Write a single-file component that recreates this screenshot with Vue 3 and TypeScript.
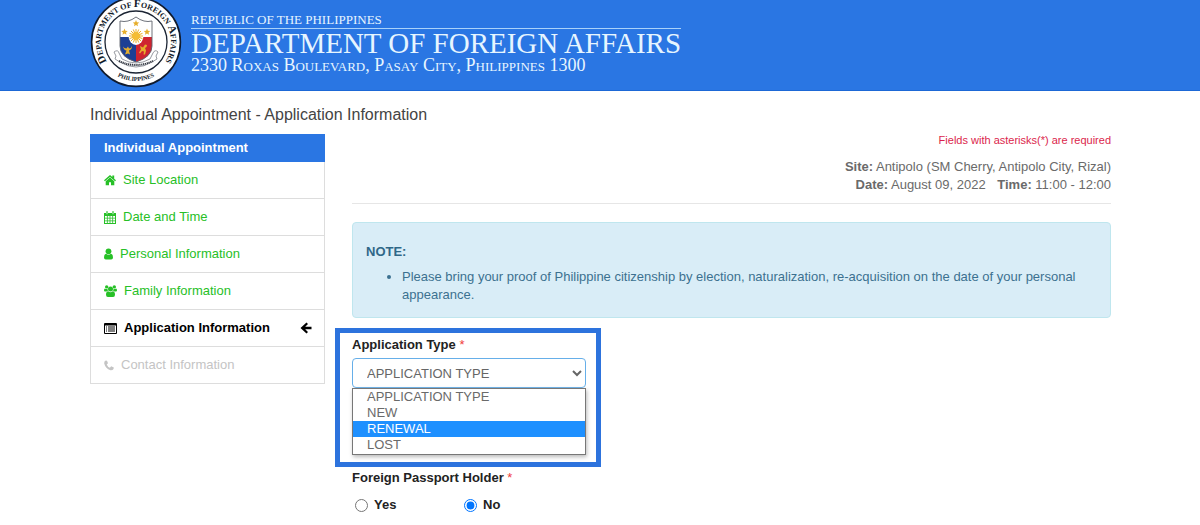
<script setup lang="ts">
import { ref } from 'vue'

type IconName = 'home' | 'calendar' | 'user' | 'users' | 'list' | 'phone'
interface Step {
  label: string
  icon: IconName
  width: number
  state: 'done' | 'current' | 'pending'
}

const steps: Step[] = [
  { label: 'Site Location', icon: 'home', width: 12, state: 'done' },
  { label: 'Date and Time', icon: 'calendar', width: 12, state: 'done' },
  { label: 'Personal Information', icon: 'user', width: 9, state: 'done' },
  { label: 'Family Information', icon: 'users', width: 13, state: 'done' },
  { label: 'Application Information', icon: 'list', width: 13, state: 'current' },
  { label: 'Contact Information', icon: 'phone', width: 10, state: 'pending' },
]

const options = ['APPLICATION TYPE', 'NEW', 'RENEWAL', 'LOST']
const applicationType = ref('APPLICATION TYPE')
const highlighted = ref('RENEWAL')
const foreignPassport = ref('No')
</script>

<template>
  <div class="page">
    <header class="banner">
      <svg class="seal" viewBox="0 0 92 92" role="img" aria-label="Department of Foreign Affairs seal">
        <defs>
          <path id="arc-top" d="M16 64.200 A35 35 0 1 1 76 64.200" />
          <path id="arc-bottom" d="M20 75 A39 39 0 0 0 72 75" />
          <clipPath id="shield">
            <path d="M30 25 Q38 27 46 21 Q54 27 62 25 V50 Q62 61 46 66 Q30 61 30 50 Z" />
          </clipPath>
        </defs>
        <circle cx="46" cy="46" r="44.4" fill="#fff" stroke="#101a2c" stroke-width="1.6" />
        <circle cx="46" cy="46" r="31" fill="#fff" stroke="#1b2433" stroke-width="1.3" />
        <text class="seal-text">
          <textPath href="#arc-top" startOffset="50%" text-anchor="middle"><tspan class="big">D</tspan>EPARTMENT OF <tspan class="big">F</tspan>OREIGN <tspan class="big">A</tspan>FFAIRS</textPath>
        </text>
        <text class="seal-text small">
          <textPath href="#arc-bottom" startOffset="50%" text-anchor="middle">PHILIPPINES</textPath>
        </text>
        <g clip-path="url(#shield)">
          <rect x="29" y="20" width="34" height="22" fill="#fff" />
          <rect x="29" y="41" width="17" height="26" fill="#1d3f94" />
          <rect x="46" y="41" width="17" height="26" fill="#cf2430" />
        </g>
        <path d="M30 25 Q38 27 46 21 Q54 27 62 25 V50 Q62 61 46 66 Q30 61 30 50 Z" fill="none" stroke="#5d626c" stroke-width=".9" />
        <ellipse cx="46" cy="40" rx="7.500" ry="9" fill="#fff" />
        <path d="M46 33V47M39 40H53M41 35L51 45M51 35L41 45M43.300 33.500L48.700 46.500M48.700 33.500L43.300 46.500M39.500 37.300L52.500 42.700M52.500 37.300L39.500 42.700" stroke="#eeb026" stroke-width="1" />
        <circle cx="46" cy="40" r="4" fill="#f4bd35" />
        <g fill="#e6ae2c">
          <path d="M46 24l.9 2.200 2.300.2-1.700 1.500.5 2.300-2-1.200-2 1.200.5-2.300-1.700-1.500 2.300-.2z" />
          <path d="M34.500 32.500l.9 2.200 2.300.2-1.700 1.500.5 2.300-2-1.200-2 1.200.5-2.300-1.700-1.500 2.300-.2z" />
          <path d="M57 32.500l.9 2.200 2.300.2-1.700 1.500.5 2.300-2-1.200-2 1.200.5-2.300-1.700-1.500 2.300-.2z" />
          <path d="M33 50.500q1 4 3.500 4l-1.500 4 3-1 2 1-1-4q3-1 3-4.500-1 2.500-3 2.500l-1-2-1.500 2q-2.500 0-3.500-2z" />
          <path d="M50 50l3 1.500 2-3 2 .5-.5 2-1.500 1 1 2.500-1 4h-1.500l.5-3-2-.5-2 2.500-1-1 2-3z" />
        </g>
        <path d="M24 56q4-3 5 1l3 6q14 8 28 0l3-6q2-4 5-1l-2 4 1 3-5 3q-16 10-32 0l-5-3 1-3z" fill="#fff" stroke="#8b8f96" stroke-width=".9" />
        <path d="M29 65q17 8 34 0" fill="none" stroke="#353a44" stroke-width="2" stroke-dasharray="1.200 .7" />
      </svg>
      <div class="banner-text">
        <div class="republic">REPUBLIC OF THE PHILIPPINES</div>
        <div class="department">DEPARTMENT OF FOREIGN AFFAIRS</div>
        <div class="address">2330 Roxas Boulevard, Pasay City, Philippines 1300</div>
      </div>
    </header>

    <main class="content">
      <h1 class="title">Individual Appointment - Application Information</h1>
      <div class="columns">
        <nav class="steps" aria-label="Individual Appointment">
          <h2 class="steps-head">Individual Appointment</h2>
          <a v-for="step in steps" :key="step.label" href="#" class="step" :class="step.state">
            <svg v-if="step.icon === 'home'" :width="step.width" height="12" viewBox="0 0 12 12">
              <path d="M6 1 0 6.300l.9 1L6 2.900l5.100 4.400.9-1-1.800-1.600V1.500H8.300v1.500z" />
              <path d="M6 3.500 1.700 7.300V11.200h3.300V8.200h2v3h3.300V7.300z" />
            </svg>
            <svg v-else-if="step.icon === 'calendar'" :width="step.width" height="13" viewBox="0 0 12 13">
              <path fill-rule="evenodd" d="M0 2h2V.5h2V2h4V.5h2V2h2v11H0zM1 5v1.800h1.900V5zM3.700 5v1.800h1.900V5zM6.400 5v1.800h1.900V5zM9.100 5v1.800H11V5zM1 7.600v1.800h1.900V7.600zM3.700 7.600v1.800h1.900V7.600zM6.400 7.600v1.800h1.900V7.600zM9.100 7.600v1.800H11V7.600zM1 10.200V12h1.900v-1.800zM3.700 10.200V12h1.900v-1.800zM6.400 10.200V12h1.900v-1.800zM9.100 10.200V12H11v-1.800z" />
              <path d="M2.600 1h.8v2.300h-.8zM8.600 1h.8v2.300h-.8z" fill="#fff" />
            </svg>
            <svg v-else-if="step.icon === 'user'" :width="step.width" height="12" viewBox="0 0 9 12">
              <circle cx="4.500" cy="3.300" r="2.900" />
              <path d="M2 5.800Q0 6.200 0 9.500q0 2 1.800 2h5.400q1.800 0 1.800-2Q9 6.200 7 5.800 4.500 7.800 2 5.800z" />
            </svg>
            <svg v-else-if="step.icon === 'users'" :width="step.width" height="12" viewBox="0 0 13 12">
              <circle cx="2.700" cy="1.900" r="1.700" /><circle cx="10.300" cy="1.900" r="1.700" />
              <circle cx="6.500" cy="4" r="2.500" />
              <path d="M1 3.500Q0 3.600 0 5.500 0 6.500 1 6.500h1.600Q3.300 5.900 4 5.800 3.400 4.900 3.500 3.800 2.200 4.500 1 3.500zM12 3.500q1 .1 1 2 0 1-1 1h-1.600Q9.700 5.900 9 5.800q.6-.9.500-2 1.300.7 2.500-.3z" />
              <path d="M4.200 6.300Q2 6.500 2 9.800 2 12 3.900 12h5.200Q11 12 11 9.800 11 6.500 8.800 6.300q-2.300 2-4.600 0z" />
            </svg>
            <svg v-else-if="step.icon === 'list'" :width="step.width" height="11" viewBox="0 0 13 11">
              <path fill-rule="evenodd" d="M1 0h11q1 0 1 1v9q0 1-1 1H1q-1 0-1-1V1q0-1 1-1zM1 2.500V10h11V2.500z" />
              <path d="M2 3.500h1v1H2zM4 3.500h7v1H4zM2 5.500h1v1H2zM4 5.500h7v1H4zM2 7.600h1v1H2zM4 7.600h7v1H4z" />
            </svg>
            <svg v-else :width="step.width" height="11" viewBox="0 0 10 11">
              <path d="M1.800.5 3 .8l1 2.400-1.300 1.200q1 2.400 3.200 3.300l1.300-1.400L9.800 7.600 9.500 9q-.8 1.500-3 1.300Q1.500 8.700.2 3.500 0 1.200 1.800.5z" />
            </svg>
            <span>{{ step.label }}</span>
            <svg v-if="step.state === 'current'" class="arrow" width="12" height="12" viewBox="0 0 12 12">
              <path d="M6.500.4 8 1.900 5.200 4.800H11.500V7.200H5.200L8 10.100 6.500 11.600.5 6z" />
            </svg>
          </a>
        </nav>

        <form class="form">
          <p class="required-note">Fields with asterisks(*) are required</p>
          <div class="summary">
            <div><b>Site:</b> Antipolo (SM Cherry, Antipolo City, Rizal)</div>
            <div><b>Date:</b> August 09, 2022 <b class="time">Time:</b> 11:00 - 12:00</div>
          </div>
          <section class="note">
            <strong>NOTE:</strong>
            <ul>
              <li>Please bring your proof of Philippine citizenship by election, naturalization, re-acquisition on the date of your personal appearance.</li>
            </ul>
          </section>

          <div class="type-field">
            <label class="field-label" for="application-type">Application Type <span class="star">*</span></label>
            <select id="application-type" v-model="applicationType" class="type-select">
              <option v-for="option in options" :key="option">{{ option }}</option>
            </select>
            <ul class="type-options" role="listbox" aria-label="Application Type">
              <li
                v-for="option in options"
                :key="option"
                role="option"
                :aria-selected="option === highlighted"
                :class="{ active: option === highlighted }"
                @mouseenter="highlighted = option"
                @click="applicationType = option"
              >{{ option }}</li>
            </ul>
          </div>

          <fieldset class="passport">
            <legend class="field-label">Foreign Passport Holder <span class="star">*</span></legend>
            <div class="radios">
              <label v-for="answer in ['Yes', 'No']" :key="answer">
                <input v-model="foreignPassport" type="radio" name="foreign-passport" :value="answer" />{{ answer }}
              </label>
            </div>
          </fieldset>
        </form>
      </div>
    </main>
  </div>
</template>

<style>
body {
  margin: 0;
  background: #fff;
}
</style>

<style scoped>
.page {
  font: 13px/18px "Liberation Sans", Arial, sans-serif;
  color: #6a6a6a;
}
.page * {
  box-sizing: border-box;
}
.banner {
  display: flex;
  align-items: flex-start;
  gap: 9px;
  height: 91px;
  padding: 0 90px;
  overflow: hidden;
  background: #2a76e3;
  border-bottom: 1px solid #1d68d6;
}
.seal {
  flex: none;
  width: 92px;
  height: 92px;
  margin-top: -4px;
}
.seal-text {
  font: bold 8px "Liberation Serif", serif;
  fill: #111a29;
}
.seal-text .big {
  font-size: 11px;
}
.seal-text.small {
  font-size: 6px;
}
.banner-text {
  padding-top: 12px;
  font-family: "Liberation Serif", "Times New Roman", serif;
  color: #e6f5ff;
  white-space: nowrap;
}
.republic {
  font-size: 13px;
  line-height: 16px;
  border-bottom: 1px solid #a9d2fa;
}
.department {
  font-size: 29px;
  line-height: 28px;
}
.address {
  font-size: 18px;
  line-height: 16px;
  font-variant: small-caps;
}
.content {
  padding: 14px 89px 12px 90px;
}
.title {
  margin: 0 0 9px;
  font-size: 16px;
  line-height: 20px;
  font-weight: normal;
  color: #444;
}
.columns {
  display: flex;
  align-items: flex-start;
  gap: 27px;
}
.steps {
  flex: 0 0 235px;
  border: 1px solid #ddd;
  border-top: 0;
}
.steps-head {
  margin: 0 -1px;
  padding: 0 14px;
  font-size: 13px;
  line-height: 28px;
  color: #fff;
  background: #2a76e3;
}
.step {
  display: flex;
  align-items: center;
  gap: 7px;
  height: 37px;
  padding: 0 12px 0 13px;
  border-bottom: 1px solid #ddd;
  text-decoration: none;
  color: #27c027;
}
.step:last-child {
  height: 36px;
  border-bottom: 0;
}
.step svg {
  flex: none;
  fill: currentColor;
}
.step.current {
  font-weight: bold;
  color: #000;
}
.step.pending {
  color: #c4c4c4;
}
.step .arrow {
  margin-left: auto;
}
.form {
  flex: 1;
  min-width: 0;
}
.required-note {
  margin: 0 0 11px;
  font-size: 11px;
  line-height: 13px;
  text-align: right;
  color: #db1f4c;
}
.summary {
  padding-bottom: 9px;
  border-bottom: 1px solid #e6e6e6;
  text-align: right;
}
.time {
  margin-left: 8px;
}
.note {
  margin: 18px 0 10px;
  padding: 20px 13px 13px;
  border: 1px solid #bfe6ee;
  border-radius: 4px;
  background: #d9edf7;
  color: #3c7190;
}
.note strong {
  display: block;
  color: #2f6788;
}
.note ul {
  margin: 7px 0 0;
  padding-left: 36px;
}
.type-field {
  width: 266px;
  margin-left: -17px;
  padding: 3px 10px 7px 12px;
  border: 5px solid #2d73dd;
}
.field-label {
  display: block;
  padding: 0;
  font-weight: bold;
  color: #222;
}
.star {
  font-weight: normal;
  color: #f03c3c;
}
.type-select {
  display: block;
  width: 100%;
  height: 30px;
  margin-top: 4px;
  padding: 0 0 0 10px;
  border: 1px solid #66afe9;
  border-radius: 4px;
  background: #fff;
  font: inherit;
  color: #666;
}
.type-options {
  margin: 0;
  padding: 0 0 1px;
  list-style: none;
  border: 1px solid #777;
  box-shadow: 1px 2px 4px #bbb;
}
.type-options li {
  padding-left: 14px;
  line-height: 16px;
}
.type-options .active {
  color: #fff;
  background: #1e90ff;
}
.passport {
  margin: 2px 0 0;
  padding: 0;
  border: 0;
}
.radios {
  display: flex;
  padding: 9px 0 0 3px;
}
.radios label {
  display: flex;
  align-items: center;
  gap: 6px;
  width: 109px;
  font-weight: bold;
  color: #222;
}
.radios input {
  width: 13px;
  height: 13px;
  margin: 0;
}
</style>
